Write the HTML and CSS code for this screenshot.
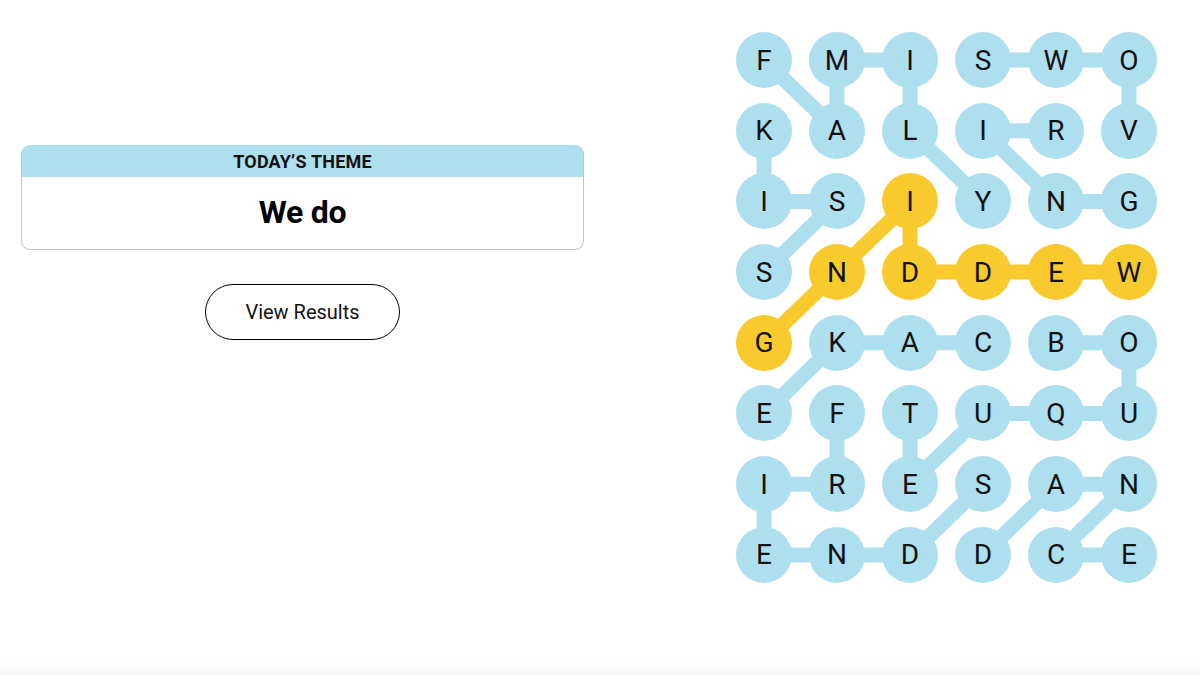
FILE: index.html
```html
<!DOCTYPE html>
<html lang="en">
<head>
<meta charset="utf-8">
<title>Strands</title>
<link rel="stylesheet" href="styles.css">
</head>
<body>
<div class="page">
  <section class="left">
    <div class="card">
      <div class="card-head">TODAY’S THEME</div>
      <div class="card-body">We do</div>
    </div>
    <button class="results">View Results</button>
  </section>
  <section class="board">
    <svg class="links" width="421" height="551" viewBox="0 0 421 551">
      <g stroke="#aedfee" stroke-width="15" fill="none">
        <!-- FAMILY -->
        <line x1="28" y1="28" x2="101" y2="98.7"/>
        <line x1="101" y1="98.7" x2="101" y2="28"/>
        <line x1="101" y1="28" x2="174" y2="28"/>
        <line x1="174" y1="28" x2="174" y2="98.7"/>
        <line x1="174" y1="98.7" x2="247" y2="169.4"/>
        <!-- VOWS -->
        <line x1="393" y1="98.7" x2="393" y2="28"/>
        <line x1="393" y1="28" x2="247" y2="28"/>
        <!-- RING -->
        <line x1="320" y1="98.7" x2="247" y2="98.7"/>
        <line x1="247" y1="98.7" x2="320" y2="169.4"/>
        <line x1="320" y1="169.4" x2="393" y2="169.4"/>
        <!-- KISS -->
        <line x1="28" y1="98.7" x2="28" y2="169.4"/>
        <line x1="28" y1="169.4" x2="101" y2="169.4"/>
        <line x1="101" y1="169.4" x2="28" y2="240.1"/>
        <!-- CAKE -->
        <line x1="247" y1="310.8" x2="101" y2="310.8"/>
        <line x1="101" y1="310.8" x2="28" y2="381.5"/>
        <!-- BOUQUET -->
        <line x1="320" y1="310.8" x2="393" y2="310.8"/>
        <line x1="393" y1="310.8" x2="393" y2="381.5"/>
        <line x1="393" y1="381.5" x2="247" y2="381.5"/>
        <line x1="247" y1="381.5" x2="174" y2="452.2"/>
        <line x1="174" y1="452.2" x2="174" y2="381.5"/>
        <!-- FRIENDS -->
        <line x1="101" y1="381.5" x2="101" y2="452.2"/>
        <line x1="101" y1="452.2" x2="28" y2="452.2"/>
        <line x1="28" y1="452.2" x2="28" y2="522.9"/>
        <line x1="28" y1="522.9" x2="174" y2="522.9"/>
        <line x1="174" y1="522.9" x2="247" y2="452.2"/>
        <!-- DANCE -->
        <line x1="247" y1="522.9" x2="320" y2="452.2"/>
        <line x1="320" y1="452.2" x2="393" y2="452.2"/>
        <line x1="393" y1="452.2" x2="320" y2="522.9"/>
        <line x1="320" y1="522.9" x2="393" y2="522.9"/>
      </g>
      <g stroke="#f8ca2e" stroke-width="15" fill="none">
        <!-- WEDDING -->
        <line x1="393" y1="240.1" x2="174" y2="240.1"/>
        <line x1="174" y1="240.1" x2="174" y2="169.4"/>
        <line x1="174" y1="169.4" x2="101" y2="240.1"/>
        <line x1="101" y1="240.1" x2="28" y2="310.8"/>
      </g>
    </svg>
    <div class="grid">
      <span class="cell">F</span><span class="cell">M</span><span class="cell">I</span><span class="cell">S</span><span class="cell">W</span><span class="cell">O</span>
      <span class="cell">K</span><span class="cell">A</span><span class="cell">L</span><span class="cell">I</span><span class="cell">R</span><span class="cell">V</span>
      <span class="cell">I</span><span class="cell">S</span><span class="cell gold">I</span><span class="cell">Y</span><span class="cell">N</span><span class="cell">G</span>
      <span class="cell">S</span><span class="cell gold">N</span><span class="cell gold">D</span><span class="cell gold">D</span><span class="cell gold">E</span><span class="cell gold">W</span>
      <span class="cell gold">G</span><span class="cell">K</span><span class="cell">A</span><span class="cell">C</span><span class="cell">B</span><span class="cell">O</span>
      <span class="cell">E</span><span class="cell">F</span><span class="cell">T</span><span class="cell">U</span><span class="cell">Q</span><span class="cell">U</span>
      <span class="cell">I</span><span class="cell">R</span><span class="cell">E</span><span class="cell">S</span><span class="cell">A</span><span class="cell">N</span>
      <span class="cell">E</span><span class="cell">N</span><span class="cell">D</span><span class="cell">D</span><span class="cell">C</span><span class="cell">E</span>
    </div>
  </section>
</div>
<div class="footer-fade"></div>
</body>
</html>
```

FILE: styles.css
```css
html, body {
  margin: 0;
  padding: 0;
  background: #ffffff;
  color: #000000;
  font-family: "Liberation Sans", Arial, sans-serif;
}

.page {
  display: flex;
  height: 663px;
}

.left {
  width: 563px;
  padding: 145px 0 0 21px;
  display: flex;
  flex-direction: column;
  align-items: center;
}

.card {
  width: 563px;
  box-sizing: border-box;
  border: 1px solid #c4c4c4;
  border-top: none;
  border-radius: 9px;
  overflow: hidden;
}

.card-head {
  height: 32px;
  background: #aedfee;
  display: flex;
  align-items: center;
  justify-content: center;
  font-family: "Roboto", "Liberation Sans", sans-serif;
  font-weight: 700;
  font-size: 18px;
  letter-spacing: 0.2px;
  color: #121212;
}

.card-body {
  height: 72px;
  display: flex;
  align-items: center;
  justify-content: center;
  padding-bottom: 2px;
  box-sizing: border-box;
  font-family: "Roboto", "Liberation Sans", sans-serif;
  font-weight: 700;
  font-size: 32px;
  letter-spacing: -0.3px;
}

.results {
  margin-top: 34px;
  width: 195px;
  height: 56px;
  border: 1.5px solid #000;
  border-radius: 28px;
  background: #fff;
  font-family: "Roboto", "Liberation Sans", sans-serif;
  font-size: 20px;
  color: #121212;
  padding: 0;
}

.board {
  position: relative;
  margin: 32px 0 0 152px;
  width: 421px;
  height: 551px;
}

.links {
  position: absolute;
  left: 0;
  top: 0;
}

.grid {
  position: relative;
  display: grid;
  grid-template-columns: repeat(6, 56px);
  grid-auto-rows: 56px;
  column-gap: 17px;
  row-gap: 14.7px;
}

.cell {
  width: 56px;
  height: 56px;
  border-radius: 50%;
  background: #aedfee;
  display: flex;
  align-items: center;
  justify-content: center;
  font-family: "Roboto", "Liberation Sans", Arial, sans-serif;
  font-size: 28px;
  color: #121212;
}

.cell.gold {
  background: #f8ca2e;
}

.footer-fade {
  height: 12px;
  background: linear-gradient(#ffffff, #f7f7f7);
}
```
